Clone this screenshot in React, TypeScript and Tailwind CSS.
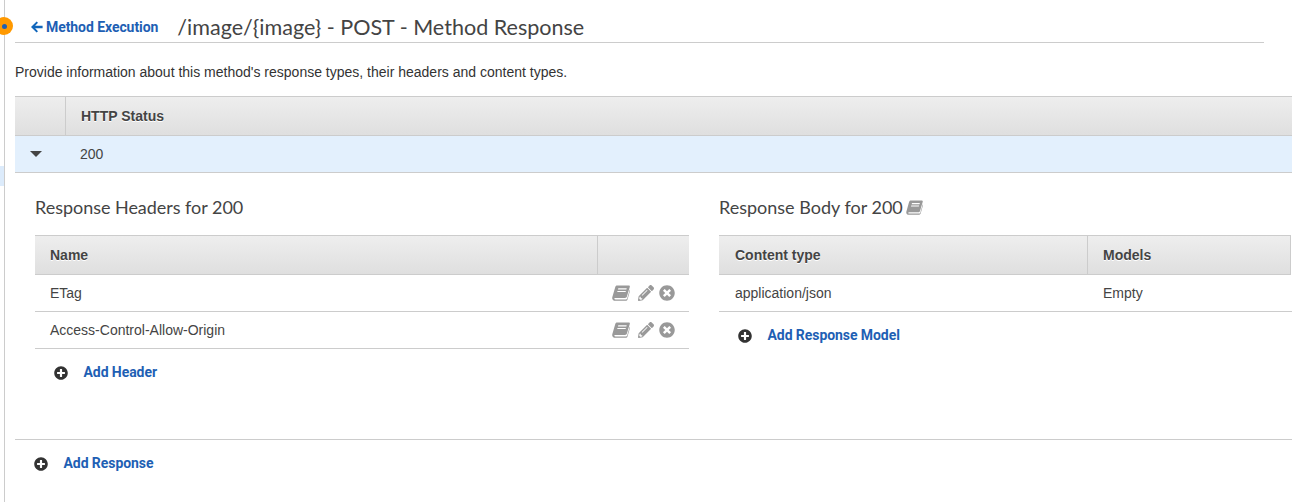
import { FaPencilAlt, FaPlusCircle, FaTimesCircle } from 'react-icons/fa';

const lato = 'font-["Lato",sans-serif]';
const roboto = "font-['Roboto',sans-serif] font-bold text-[14px] tracking-[-0.07px] text-[#1e5fb4]";

function BookIcon({ className }: { className?: string }) {
    return (
        <svg viewBox="0 0 18 16" className={className} fill="currentColor">
            <path
                fillRule="evenodd"
                d="M5 0.5 H16.8 C17.6 0.5 18 1.1 17.8 1.9 L14.9 11.6 C14.6 12.6 13.9 13 13 13 H3.4 C2.5 13 2.2 13.4 2.3 13.8 C2.4 14.3 2.9 14.5 3.6 14.5 H14 C14.5 14.5 14.9 14.3 15.1 13.8 L17.8 4.6 C18.1 4.9 18.1 5.4 18 5.8 L15.6 14.2 C15.3 15.2 14.6 15.8 13.6 15.8 H3 C1.5 15.8 0.2 14.6 0.2 13.2 C0.2 12.7 0.3 12.2 0.5 11.6 L3.2 2.2 C3.5 1.2 4.1 0.5 5 0.5 Z M6.3 3.3 L6 4.4 H14.4 L14.7 3.3 Z M5.5 5.9 L5.2 7 H13.6 L13.9 5.9 Z"
            />
        </svg>
    );
}

function ArrowLeftIcon({ className }: { className?: string }) {
    return (
        <svg viewBox="0 0 12 12" className={className} fill="currentColor">
            <path d="M5.6 0.4 L7 1.8 L4.1 4.7 H11.6 V7.3 H4.1 L7 10.2 L5.6 11.6 L0 6 Z" />
        </svg>
    );
}

function AddLink({ label }: { label: string }) {
    return (
        <div className="flex items-center gap-[15.5px]">
            <FaPlusCircle className="w-[14px] h-[14px] text-[#333]" />
            <span className={roboto}>{label}</span>
        </div>
    );
}

function RowActions() {
    return (
        <div className="flex items-center gap-[8px] text-[#999] -mt-[1px]">
            <BookIcon className="w-[18px] h-[16px]" />
            <FaPencilAlt className="w-[16px] h-[16px]" />
            <FaTimesCircle className="w-[16px] h-[16px] -ml-[3px]" />
        </div>
    );
}

const headCell = 'h-full flex items-center font-bold text-[14px] text-[#444] [text-shadow:0_1px_0_#fff] bg-gradient-to-b from-[#eeeeee] to-[#dfdfdf]';
const bodyRow = 'h-[37px] flex items-center border-b border-[#ccc] text-[14px] text-[#444]';

export default function App() {
    return (
        <div className="relative w-[1292px] h-[502px] overflow-hidden bg-white font-['Liberation_Sans',sans-serif]">
            {/* left rail */}
            <div className="absolute left-[4px] top-0 bottom-0 w-px bg-[#ccc]" />
            <div className="absolute left-0 top-[166px] w-[4px] h-[20px] bg-[#dcebfb]" />
            <div className="absolute -left-[5px] top-[17px] w-[18px] h-[18px] rounded-full bg-[#ff9900] flex items-center justify-center">
                <div className="w-[5px] h-[5px] ml-[1px] rounded-full bg-[#1e5fb4]" />
            </div>

            <div className="pl-[15px]">
                <div className="mr-[28px] h-[43px] border-b border-[#ccc] flex items-start pt-[11px]">
                    <div className="flex items-center gap-[3px] ml-[16px] h-[32px]">
                        <ArrowLeftIcon className="w-[12px] h-[12px] text-[#1166bb]" />
                        <span className={roboto}>Method Execution</span>
                    </div>
                    <h1 className={`${lato} ml-[19px] text-[21.55px] leading-[32px] text-[#444]`}>/image/{'{image}'} - POST - Method Response</h1>
                </div>

                <p className="mt-[21px] text-[14px] leading-[16px] text-[#333]">
                    Provide information about this method's response types, their headers and content types.
                </p>

                {/* status table */}
                <div className="mt-[16px] h-[40px] flex border-y border-[#ccc]">
                    <div className={`${headCell} w-[51px] border-r border-[#ccc]`} />
                    <div className={`${headCell} flex-1 pl-[15px] text-[13.8px]`}>HTTP Status</div>
                </div>
                <div className="h-[37px] flex items-center bg-[#e3f0fd] border-b border-[#ccc] text-[14px] text-[#444]">
                    <div className="w-[42px] flex justify-center">
                        <div className="w-0 h-0 border-x-[6px] border-x-transparent border-t-[6px] border-t-[#444]" />
                    </div>
                    <span className="ml-[23px]">200</span>
                </div>

                <div className="mt-[22px] pl-[20px] flex">
                    {/* response headers */}
                    <div className="w-[654px]">
                        <h2 className={`${lato} text-[18px] leading-[24px] tracking-[-0.03px] text-[#444]`}>Response Headers for 200</h2>
                        <div className="mt-[16px] h-[40px] flex border-y border-[#ccc]">
                            <div className={`${headCell} w-[563px] border-r border-[#ccc] pl-[15px]`}>Name</div>
                            <div className={`${headCell} flex-1`} />
                        </div>
                        {['ETag', 'Access-Control-Allow-Origin'].map((name) => (
                            <div key={name} className={`${bodyRow} justify-between pl-[15px] pr-[14px]`}>
                                <span>{name}</span>
                                <RowActions />
                            </div>
                        ))}
                        <div className="ml-[19px] mt-[13px]">
                            <AddLink label="Add Header" />
                        </div>
                    </div>

                    {/* response body */}
                    <div className="ml-[30px] flex-1">
                        <h2 className={`${lato} text-[18px] leading-[24px] text-[#444] flex items-center gap-[3px]`}>
                            Response Body for 200
                            <BookIcon className="w-[17px] h-[15px] text-[#999]" />
                        </h2>
                        <div className="mt-[16px] h-[40px] flex border-y border-r border-[#ccc] mr-[1px]">
                            <div className={`${headCell} w-[369px] border-r border-[#ccc] pl-[16px]`}>Content type</div>
                            <div className={`${headCell} flex-1 pl-[15px]`}>Models</div>
                        </div>
                        <div className={bodyRow}>
                            <span className="w-[369px] pl-[16px]">application/json</span>
                            <span className="pl-[15px]">Empty</span>
                        </div>
                        <div className="ml-[19px] mt-[13px]">
                            <AddLink label="Add Response Model" />
                        </div>
                    </div>
                </div>

                <div className="mt-[56px] border-t border-[#ccc] pt-[13px] pl-[19px]">
                    <AddLink label="Add Response" />
                </div>
            </div>
        </div>
    );
}
